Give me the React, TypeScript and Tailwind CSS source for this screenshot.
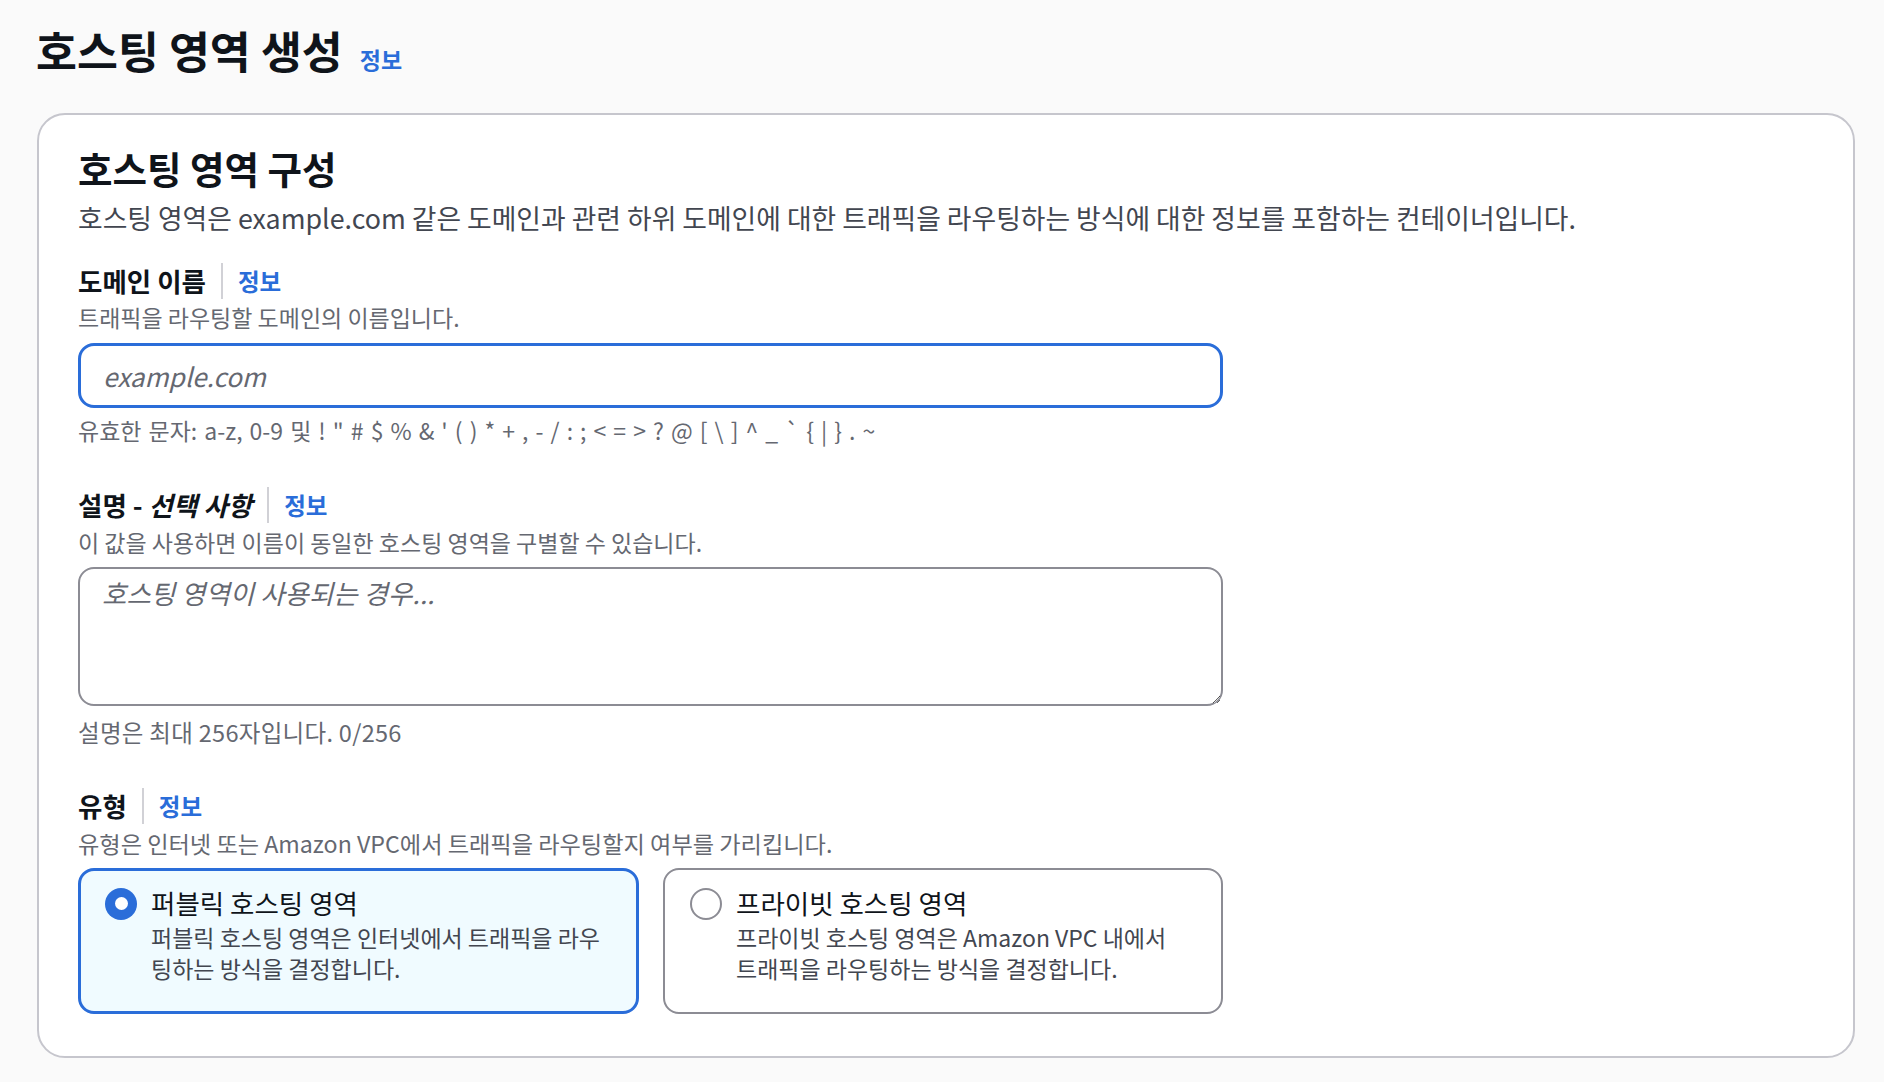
import { useState } from 'react';

const FONT = "font-['Noto_Sans_CJK_KR',sans-serif]";

const InfoLabel = ({ children }: { children: React.ReactNode }) => (
    <div className="flex items-center h-[34px]">
        <span className="text-[26.5px] font-bold text-[#0f141a] leading-[34px]">{children}</span>
        <span className="w-[2px] h-[36px] bg-[#d1d1d6] mx-[15px]" />
        <a className="text-[23.5px] font-bold text-[#2a6dd9] leading-[34px]">정보</a>
    </div>
);

const Radio = ({ checked }: { checked: boolean }) =>
    checked ? (
        <span className="shrink-0 w-[32px] h-[32px] rounded-full bg-[#2a6dd9] flex items-center justify-center">
            <span className="block w-[13px] h-[13px] rounded-full bg-white" />
        </span>
    ) : (
        <span className="block shrink-0 w-[32px] h-[32px] rounded-full border-2 border-[#8c8c94] bg-white" />
    );

const Tile = ({
    checked,
    title,
    desc,
    onClick,
}: {
    checked: boolean;
    title: string;
    desc: React.ReactNode;
    onClick: () => void;
}) => (
    <div
        onClick={onClick}
        className={`flex-1 h-[146px] rounded-[16px] flex gap-[14px] pl-[24px] pr-[20px] pt-[15px] cursor-pointer ${checked
            ? 'border-[3px] border-[#2a6dd9] bg-[#f0fbff]'
            : 'border-2 border-[#8c8c94] bg-white pl-[25px] pt-[16px]'
            }`}
    >
        <div className="shrink-0 pt-[2px]">
            <Radio checked={checked} />
        </div>
        <div>
            <div className="text-[26.5px] text-[#0f141a] leading-[34px]">{title}</div>
            <div className="mt-[2px] text-[23px] text-[#424650] leading-[31px]">{desc}</div>
        </div>
    </div>
);

export default function App() {
    const [type, setType] = useState<'public' | 'private'>('public');

    return (
        <div className={`min-h-screen bg-[#fafafa] ${FONT} pl-[37px] pr-[29px]`}>
            <div className="pt-[25px] flex items-baseline">
                <h1 className="text-[44.5px] font-bold text-[#0f141a] leading-[50px] -ml-[1px]">호스팅 영역 생성</h1>
                <a className="ml-[17px] text-[23px] font-bold text-[#2a6dd9]">정보</a>
            </div>

            <div className="mt-[36px] bg-white border-2 border-[#c6c6cd] rounded-[28px] pl-[39px] pt-[31px] pb-[42px]">
                <h2 className="text-[37.5px] font-bold text-[#0f141a] leading-[44px]">호스팅 영역 구성</h2>
                <p className="mt-[11px] text-[26.8px] text-[#424650] leading-[34px]">
                    호스팅 영역은 example.com 같은 도메인과 관련 하위 도메인에 대한 트래픽을 라우팅하는 방식에 대한 정보를 포함하는 컨테이너입니다.
                </p>

                <div className="w-[1145px]">
                    <div className="mt-[29px]">
                        <InfoLabel>도메인 이름</InfoLabel>
                    </div>
                    <p className="mt-[5px] text-[23px] text-[#656871] leading-[28px]">트래픽을 라우팅할 도메인의 이름입니다.</p>
                    <input
                        type="text"
                        placeholder="example.com"
                        className="mt-[12px] w-full h-[65px] rounded-[16px] border-[3px] border-[#2a6dd9] px-[22px] text-[26px] italic text-[#0f141a] placeholder:text-[#656871] outline-none"
                    />
                    <p className="mt-[8px] text-[23px] text-[#656871] leading-[28px] [word-spacing:1.9px]">
                        유효한 문자: a-z, 0-9 및 ! " # $ % &amp; ' ( ) * + , - / : ; &lt; = &gt; ? @ [ \ ] ^ _ ` {'{'} | {'}'} . ~
                    </p>

                    <div className="mt-[44px] flex items-center h-[34px]">
                        <span className="text-[26.5px] font-bold text-[#0f141a] leading-[34px]">
                            설명 - <i>선택 사항</i>
                        </span>
                        <span className="w-[2px] h-[36px] bg-[#d1d1d6] mx-[15px]" />
                        <a className="text-[23.5px] font-bold text-[#2a6dd9] leading-[34px]">정보</a>
                    </div>
                    <p className="mt-[6px] text-[23px] text-[#656871] leading-[28px]">
                        이 값을 사용하면 이름이 동일한 호스팅 영역을 구별할 수 있습니다.
                    </p>
                    <textarea
                        placeholder="호스팅 영역이 사용되는 경우..."
                        className="mt-[11px] block w-full h-[139px] rounded-[16px] border-2 border-[#8c8c94] px-[22px] py-[7px] text-[26.5px] leading-[34px] italic text-[#0f141a] placeholder:text-[#656871] outline-none resize-y"
                    />
                    <p className="mt-[12px] text-[23.5px] text-[#656871] leading-[28px] tracking-[0.3px]">설명은 최대 256자입니다. 0/256</p>

                    <div className="mt-[43px]">
                        <InfoLabel>유형</InfoLabel>
                    </div>
                    <p className="mt-[6px] text-[23.2px] text-[#656871] leading-[28px]">
                        유형은 인터넷 또는 Amazon VPC에서 트래픽을 라우팅할지 여부를 가리킵니다.
                    </p>
                    <div className="mt-[11px] flex gap-[24px]">
                        <Tile
                            checked={type === 'public'}
                            onClick={() => setType('public')}
                            title="퍼블릭 호스팅 영역"
                            desc={<>퍼블릭 호스팅 영역은 인터넷에서 트래픽을 라우<br />팅하는 방식을 결정합니다.</>}
                        />
                        <Tile
                            checked={type === 'private'}
                            onClick={() => setType('private')}
                            title="프라이빗 호스팅 영역"
                            desc={<>프라이빗 호스팅 영역은 Amazon VPC 내에서<br />트래픽을 라우팅하는 방식을 결정합니다.</>}
                        />
                    </div>
                </div>
            </div>
        </div>
    );
}
